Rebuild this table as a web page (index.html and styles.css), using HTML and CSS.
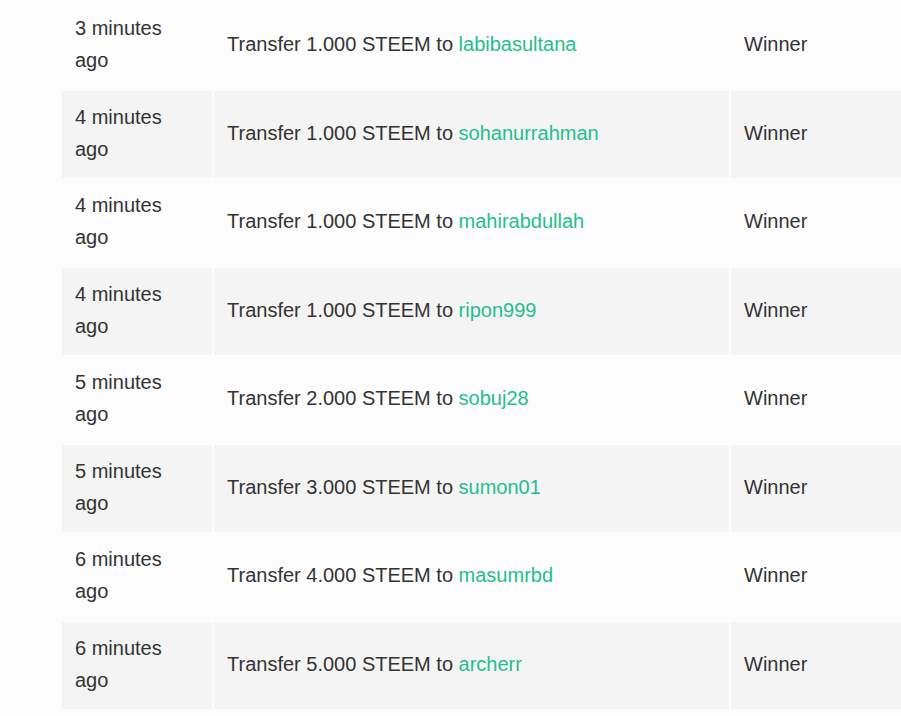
FILE: index.html
```html
<!DOCTYPE html>
<html>
<head>
<meta charset="utf-8">
<link rel="stylesheet" href="styles.css">
</head>
<body>
<table class="tx">
<tbody>
<tr><td class="c-time">3 minutes ago</td><td class="c-desc">Transfer 1.000 STEEM to <a href="#">labibasultana</a></td><td class="c-memo">Winner</td></tr>
<tr><td class="c-time">4 minutes ago</td><td class="c-desc">Transfer 1.000 STEEM to <a href="#">sohanurrahman</a></td><td class="c-memo">Winner</td></tr>
<tr><td class="c-time">4 minutes ago</td><td class="c-desc">Transfer 1.000 STEEM to <a href="#">mahirabdullah</a></td><td class="c-memo">Winner</td></tr>
<tr><td class="c-time">4 minutes ago</td><td class="c-desc">Transfer 1.000 STEEM to <a href="#">ripon999</a></td><td class="c-memo">Winner</td></tr>
<tr><td class="c-time">5 minutes ago</td><td class="c-desc">Transfer 2.000 STEEM to <a href="#">sobuj28</a></td><td class="c-memo">Winner</td></tr>
<tr><td class="c-time">5 minutes ago</td><td class="c-desc">Transfer 3.000 STEEM to <a href="#">sumon01</a></td><td class="c-memo">Winner</td></tr>
<tr><td class="c-time">6 minutes ago</td><td class="c-desc">Transfer 4.000 STEEM to <a href="#">masumrbd</a></td><td class="c-memo">Winner</td></tr>
<tr><td class="c-time">6 minutes ago</td><td class="c-desc">Transfer 5.000 STEEM to <a href="#">archerr</a></td><td class="c-memo">Winner</td></tr>
</tbody>
</table>
</body>
</html>
```
FILE: styles.css
```css
html, body {
  margin: 0;
  padding: 0;
  background: #fcfcfc;
  overflow: hidden;
}
body {
  font-family: "Liberation Sans", Arial, sans-serif;
  font-size: 20px;
  line-height: 32px;
  color: #333;
  padding: 0.5px 0 0 60px;
}
.tx {
  border-collapse: separate;
  border-spacing: 2px;
  width: 843px;
  table-layout: fixed;
}
.tx td {
  padding: 9.75px 13px 12.75px;
  vertical-align: middle;
  text-align: left;
}
.tx tr:nth-child(odd) td {
  background: #fcfcfc;
}
.tx tr:nth-child(even) td {
  background: #f4f4f4;
}
.c-time { width: 124px; }
.c-desc { width: 489px; }
.tx a {
  color: #1fbf8f;
  text-decoration: none;
}
```
